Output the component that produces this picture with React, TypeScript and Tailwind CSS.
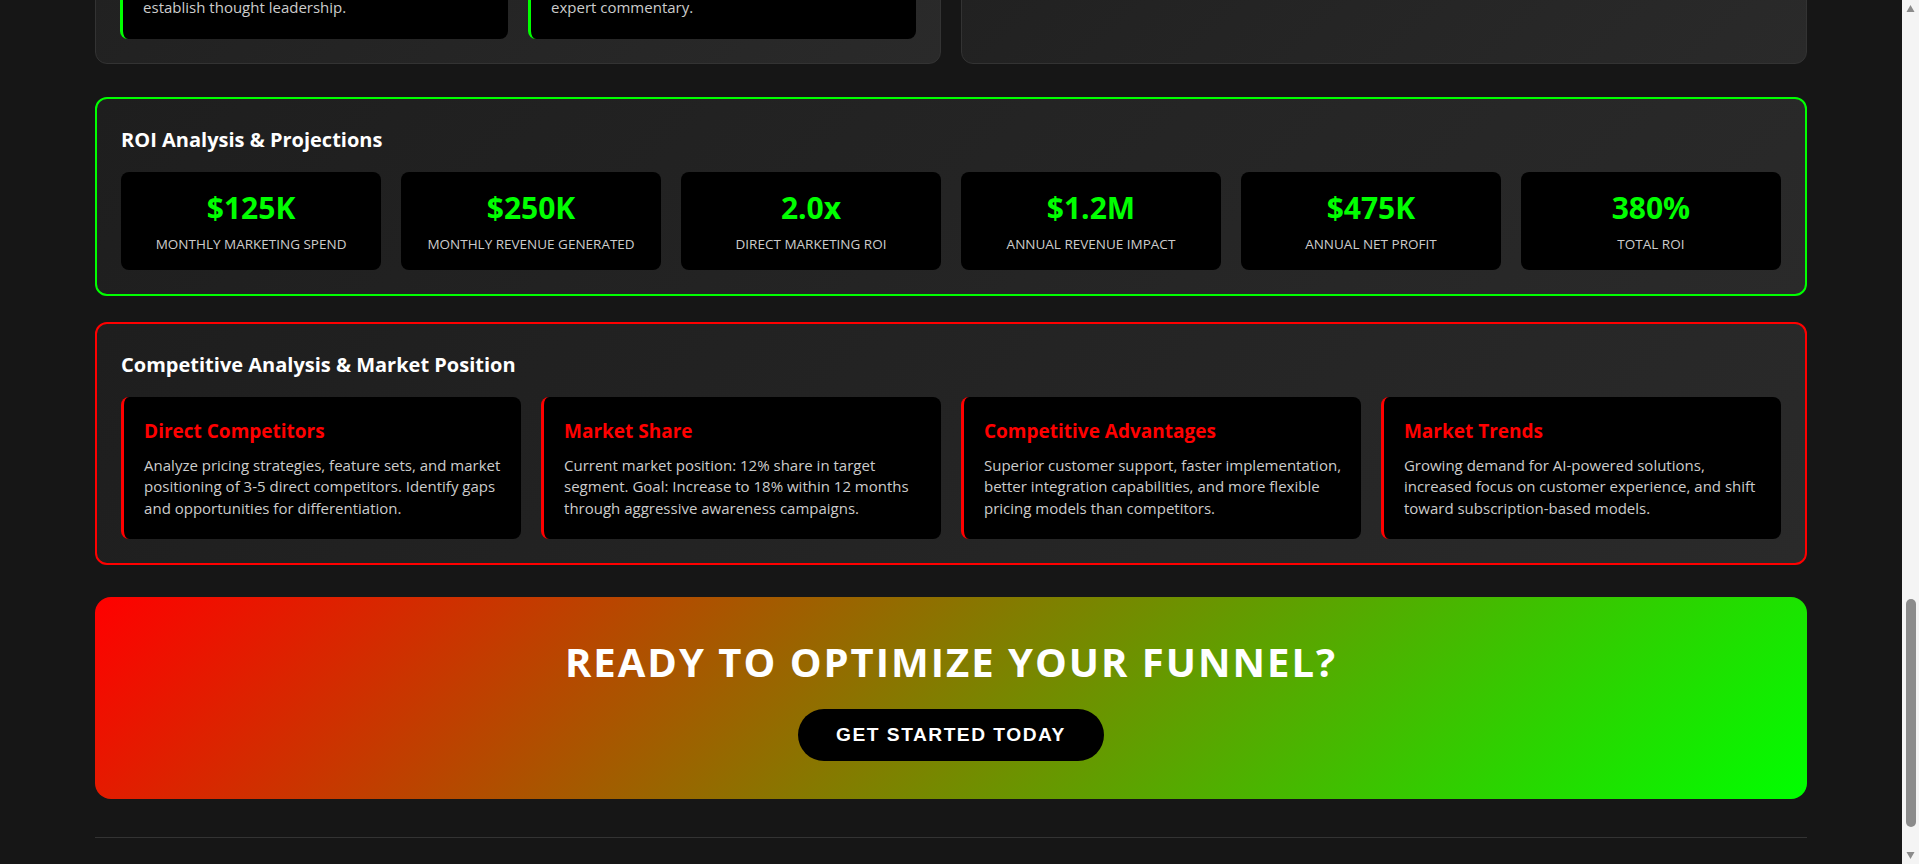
import React, { useLayoutEffect, useRef } from 'react';

type LineCard = { title: string; lines: string[] };

const stages = [
  { name: 'Awareness', rate: '100%', text: 'Paid ads, SEO and social reach' },
  { name: 'Interest', rate: '42%', text: 'Content, newsletters and webinars' },
  { name: 'Consideration', rate: '18%', text: 'Demos, case studies and trials' },
  { name: 'Conversion', rate: '6.5%', text: 'Offers, onboarding and sales calls' },
  { name: 'Retention', rate: '88%', text: 'Support, upsells and loyalty' },
];

const kpis = [
  { value: '2.4M', label: 'Monthly Impressions' },
  { value: '48K', label: 'Website Visitors' },
  { value: '3.2K', label: 'Qualified Leads' },
  { value: '$42', label: 'Cost Per Lead' },
];

const personas: LineCard[] = [
  {
    title: 'Growth-Focused Founders',
    lines: ['Early-stage leaders looking for scalable', 'acquisition channels with fast payback.', 'Value speed, clarity and measurable', 'results over brand polish.'],
  },
  {
    title: 'Marketing Managers',
    lines: ['Mid-market teams under pressure to', 'prove pipeline impact. Need reporting,', 'automation and clear attribution', 'across every campaign.'],
  },
  {
    title: 'Enterprise Buyers',
    lines: ['Large organisations with long sales', 'cycles and many stakeholders. Expect', 'security reviews, case studies and', 'dedicated account support.'],
  },
];

const contentCards: LineCard[] = [
  { title: 'SEO & Blog Content', lines: ['Publish 8-10 optimized articles a month', 'targeting high-intent keywords.'] },
  { title: 'Social Media', lines: ['Daily posts on LinkedIn, X and Instagram', 'with a focus on community building.'] },
  {
    title: 'Thought Leadership',
    lines: ['Release quarterly reports, whitepapers', 'and original research to build trust and', 'establish thought leadership.'],
  },
  {
    title: 'Video & Podcasts',
    lines: ['Weekly video tutorials and a bi-weekly', 'podcast with customer stories and', 'expert commentary.'],
  },
];

const channels = [
  { name: 'Paid Search', pct: 32 },
  { name: 'Social Ads', pct: 24 },
  { name: 'Content & SEO', pct: 20 },
  { name: 'Email Marketing', pct: 14 },
  { name: 'Events & Partnerships', pct: 10 },
];

const roiStats = [
  { value: '$125K', label: 'Monthly Marketing Spend' },
  { value: '$250K', label: 'Monthly Revenue Generated' },
  { value: '2.0x', label: 'Direct Marketing ROI' },
  { value: '$1.2M', label: 'Annual Revenue Impact' },
  { value: '$475K', label: 'Annual Net Profit' },
  { value: '380%', label: 'Total ROI' },
];

const competitive: LineCard[] = [
  {
    title: 'Direct Competitors',
    lines: [
      'Analyze pricing strategies, feature sets, and market',
      'positioning of 3-5 direct competitors. Identify gaps',
      'and opportunities for differentiation.',
    ],
  },
  {
    title: 'Market Share',
    lines: [
      'Current market position: 12% share in target',
      'segment. Goal: Increase to 18% within 12 months',
      'through aggressive awareness campaigns.',
    ],
  },
  {
    title: 'Competitive Advantages',
    lines: [
      'Superior customer support, faster implementation,',
      'better integration capabilities, and more flexible',
      'pricing models than competitors.',
    ],
  },
  {
    title: 'Market Trends',
    lines: [
      'Growing demand for AI-powered solutions,',
      'increased focus on customer experience, and shift',
      'toward subscription-based models.',
    ],
  },
];

function InfoCard({ card, accent }: { card: LineCard; accent: 'green' | 'red' }) {
  const green = accent === 'green';
  return (
    <div
      className={`rounded-lg border-l-[3px] bg-black px-5 py-5 ${green ? 'border-[#00ff00]' : 'border-[#ff0000]'}`}
    >
      <h4 className={`mb-[10px] text-[19px] font-bold leading-[28px] ${green ? 'text-[#00ff00]' : 'text-[#ff0000]'}`}>
        {card.title}
      </h4>
      <p className="whitespace-nowrap text-[15px] leading-[21.6px] text-[#cccccc]">
        {card.lines.map((line, i) => (
          <React.Fragment key={i}>
            {i > 0 && <br />}
            {line}
          </React.Fragment>
        ))}
      </p>
    </div>
  );
}

function SectionTitle({ children }: { children: React.ReactNode }) {
  return <h3 className="mb-[15px] text-xl font-bold leading-[34px] text-white">{children}</h3>;
}

function ScrollTrack() {
  return (
    <aside className="flex w-[17px] shrink-0 flex-col items-center bg-[#f4f4f4]">
      <div className="flex h-[17px] items-center justify-center">
        <svg width="9" height="9" viewBox="0 0 9 9">
          <polygon points="4.5,1 8.5,8 0.5,8" fill="#8b8b8b" />
        </svg>
      </div>
      <div className="h-[582px]" />
      <div className="h-[228px] w-[10px] rounded-full bg-[#8b8b8b]" />
      <div className="flex-1" />
      <div className="flex h-[17px] items-center justify-center">
        <svg width="9" height="9" viewBox="0 0 9 9">
          <polygon points="0.5,1 8.5,1 4.5,8" fill="#8b8b8b" />
        </svg>
      </div>
    </aside>
  );
}

export default function App() {
  const scrollRef = useRef<HTMLDivElement>(null);
  const roiRef = useRef<HTMLElement>(null);

  // open the page scrolled down to the ROI block, as in the capture
  useLayoutEffect(() => {
    const box = scrollRef.current;
    const el = roiRef.current;
    if (!box || !el) return;
    const top = el.getBoundingClientRect().top - box.getBoundingClientRect().top + box.scrollTop;
    box.scrollTop = Math.round(top - 97);
  }, []);

  const panel = 'rounded-xl bg-[linear-gradient(135deg,#1e1e1e,#2a2a2a)] p-6';

  return (
    <div className="flex h-screen bg-[#161616] font-['Open_Sans',sans-serif] text-white">
      <main ref={scrollRef} className="min-w-0 flex-1 overflow-y-scroll [scrollbar-width:none]">
        <div className="mx-auto w-[90%]">
          <header className="flex min-h-screen flex-col items-center justify-center text-center">
            <h1 className="text-5xl font-bold tracking-[2px]">MARKETING FUNNEL STRATEGY</h1>
            <p className="mt-4 text-lg text-[#cccccc]">A complete roadmap from first touch to loyal customer</p>
          </header>

          <section className={`${panel} mb-8 border border-[#333333]`}>
            <SectionTitle>Funnel Stages</SectionTitle>
            <div className="grid grid-cols-5 gap-5">
              {stages.map((s) => (
                <div key={s.name} className="rounded-lg border-t-[3px] border-[#00ff00] bg-black p-5 text-center">
                  <div className="text-lg font-bold text-[#00ff00]">{s.name}</div>
                  <div className="my-2 text-3xl font-bold">{s.rate}</div>
                  <div className="text-sm text-[#cccccc]">{s.text}</div>
                </div>
              ))}
            </div>
          </section>

          <section className={`${panel} mb-8 border border-[#333333]`}>
            <SectionTitle>Target Audience Personas</SectionTitle>
            <div className="grid grid-cols-3 gap-5">
              {personas.map((p) => (
                <InfoCard key={p.title} card={p} accent="green" />
              ))}
            </div>
          </section>

          <section className={`${panel} mb-8 border border-[#333333]`}>
            <SectionTitle>Key Performance Metrics</SectionTitle>
            <div className="grid grid-cols-4 gap-5">
              {kpis.map((k) => (
                <div key={k.label} className="rounded-lg bg-black px-5 py-6 text-center">
                  <div className="text-[30px] font-bold leading-[36px] text-[#00ff00]">{k.value}</div>
                  <div className="mt-2 text-[13.5px] uppercase text-[#cccccc]">{k.label}</div>
                </div>
              ))}
            </div>
          </section>

          <div className="mb-[33px] grid grid-cols-2 gap-5">
            <section className={`${panel} border border-[#333333]`}>
              <SectionTitle>Content Marketing Strategy</SectionTitle>
              <div className="grid grid-cols-2 gap-5">
                {contentCards.map((c) => (
                  <InfoCard key={c.title} card={c} accent="green" />
                ))}
              </div>
            </section>
            <section className={`${panel} border border-[#333333]`}>
              <SectionTitle>Channel Budget Allocation</SectionTitle>
              <div className="flex flex-col gap-4">
                {channels.map((c) => (
                  <div key={c.name}>
                    <div className="mb-1 flex justify-between text-sm text-[#cccccc]">
                      <span>{c.name}</span>
                      <span className="text-[#00ff00]">{c.pct}%</span>
                    </div>
                    <div className="h-2 rounded-full bg-black">
                      <div className="h-2 rounded-full bg-[#00ff00]" style={{ width: `${c.pct * 3}%` }} />
                    </div>
                  </div>
                ))}
              </div>
            </section>
          </div>

          <section ref={roiRef} className={`${panel} mb-[26px] border-2 border-[#00ff00]`}>
            <SectionTitle>ROI Analysis &amp; Projections</SectionTitle>
            <div className="grid grid-cols-6 gap-5">
              {roiStats.map((s) => (
                <div key={s.label} className="rounded-lg bg-black pb-[16px] pt-[18px] text-center">
                  <div className="mb-2 text-[30px] font-bold leading-[36px] text-[#00ff00]">{s.value}</div>
                  <div className="text-[13.5px] uppercase leading-[20px] text-[#cccccc]">{s.label}</div>
                </div>
              ))}
            </div>
          </section>

          <section className={`${panel} mb-8 border-2 border-[#ff0000]`}>
            <SectionTitle>Competitive Analysis &amp; Market Position</SectionTitle>
            <div className="grid grid-cols-4 gap-5">
              {competitive.map((c) => (
                <InfoCard key={c.title} card={c} accent="red" />
              ))}
            </div>
          </section>

          <section className="flex flex-col items-center rounded-2xl bg-[linear-gradient(135deg,#ff0000,#00ff00)] pb-[38px] pt-10 text-center">
            <h2 className="mb-[22px] text-[40px] font-bold leading-[50px] tracking-[2px]">READY TO OPTIMIZE YOUR FUNNEL?</h2>
            <button
              type="button"
              className="rounded-full bg-black px-[38px] py-[15px] font-['Liberation_Sans',Arial,sans-serif] text-[19.2px] font-bold leading-[22px] tracking-[1.5px] text-white"
            >
              GET STARTED TODAY
            </button>
          </section>

          <footer className="mt-[38px] border-t border-[#333333] pb-12 pt-8 text-center text-sm text-[#888888]">
            © 2024 Marketing Funnel Strategy. All rights reserved.
          </footer>
        </div>
      </main>
      <ScrollTrack />
    </div>
  );
}
